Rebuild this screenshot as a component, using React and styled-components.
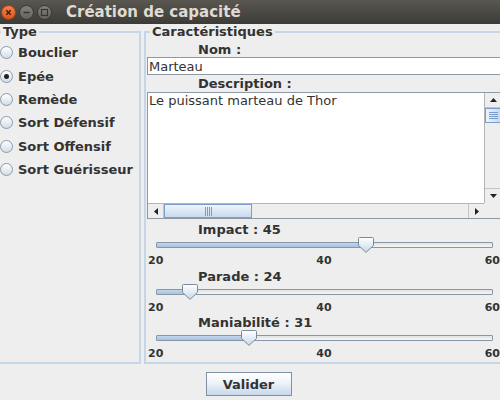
// Packages
import React from "react"
import styled, { createGlobalStyle } from "styled-components"

// Data
const types = ["Bouclier", "Epée", "Remède", "Sort Défensif", "Sort Offensif", "Sort Guérisseur"]

const stats = [
    { name: "Impact", value: 45 },
    { name: "Parade", value: 24 },
    { name: "Maniabilité", value: 31 },
]

const MIN = 20
const MAX = 60

// Styles
const GlobalStyle = createGlobalStyle`
    html, body {
        margin: 0;
        padding: 0;
        background: #eeeeee;
    }

    body {
        font-family: "DejaVu Sans", "Liberation Sans", sans-serif;
    }
`

const Window = styled.div`
    width: 500px;
    height: 400px;
    overflow: hidden;
    display: flex;
    flex-direction: column;
    background: #eeeeee;
    color: #333333;
`

const TitleBar = styled.header`
    height: 24px;
    flex: none;
    display: flex;
    align-items: center;
    padding-left: 1px;
    background: linear-gradient(#5a5750, #3c3b37);
`

const Controls = styled.div`
    display: flex;
    gap: 3px;
`

const Title = styled.h1`
    margin: 0 0 0 14px;
    font-size: 15px;
    font-weight: bold;
    color: #dfdbd2;
    white-space: nowrap;
`

const Panels = styled.main`
    height: 340px;
    flex: none;
    display: flex;
    gap: 3px;
    padding-top: 1px;
    margin-left: -5px;
    box-sizing: border-box;
`

const Group = styled.fieldset`
    width: ${props => props.$width};
    flex: none;
    margin: 0;
    padding: 0;
    min-inline-size: 0;
    box-sizing: border-box;
    border: 2px solid #c6d6e7;
    display: flex;
    flex-direction: column;
`

const Legend = styled.legend`
    margin-left: 4px;
    padding: 0 2px;
    font-size: 13px;
    line-height: 14px;
    font-weight: bold;
    color: #333333;
`

const RadioList = styled.div`
    display: flex;
    flex-direction: column;
    padding: 2px 0 0 3px;
`

const RadioRow = styled.label`
    height: 23.4px;
    display: flex;
    align-items: center;
    gap: 5px;
    font-size: 13px;
    font-weight: bold;
    white-space: nowrap;
`

const RadioMark = styled.span`
    width: 13px;
    height: 13px;
    flex: none;
    box-sizing: border-box;
    border-radius: 50%;
    border: 1px solid #8a9aae;
    background: linear-gradient(#ffffff, #d2dce8);
    display: flex;
    align-items: center;
    justify-content: center;

    &::after {
        content: "";
        width: 5px;
        height: 5px;
        border-radius: 50%;
        background: #222222;
        display: ${props => (props.$checked ? "block" : "none")};
    }
`

const Fields = styled.div`
    display: flex;
    flex-direction: column;
    padding-left: 1px;
`

const FieldLabel = styled.div`
    padding-left: 51px;
    margin-top: ${props => props.$top || "0"};
    font-size: 13px;
    line-height: 15px;
    font-weight: bold;
    white-space: nowrap;
`

const TextInput = styled.input`
    height: 18px;
    box-sizing: border-box;
    margin: 0;
    padding: 0 1px;
    border: 1px solid #8e99a6;
    background: #ffffff;
    font-family: inherit;
    font-size: 13px;
    color: #333333;
    outline: none;
`

const ScrollPane = styled.div`
    height: 127px;
    margin: 1px 0 3px;
    box-sizing: border-box;
    border: 1px solid #8e99a6;
    display: grid;
    grid-template-columns: 1fr 17px;
    grid-template-rows: 1fr 15px;
`

const Viewport = styled.div`
    background: #ffffff;
    padding: 0 1px;
    font-size: 13px;
    line-height: 15px;
    white-space: nowrap;
    overflow: hidden;
`

const Bar = styled.div`
    display: flex;
    flex-direction: ${props => (props.$vertical ? "column" : "row")};
    background: #eeeeee;
    border-${props => (props.$vertical ? "left" : "top")}: 1px solid #b5b5b5;
`

const ArrowButton = styled.div`
    flex: none;
    width: ${props => (props.$vertical ? "auto" : "16px")};
    height: ${props => (props.$vertical ? "15px" : "auto")};
    display: flex;
    align-items: center;
    justify-content: center;
    background: #eeeeee;
    box-sizing: border-box;
    border-${props => props.$edge}: 1px solid #c4c4c4;
`

const Track = styled.div`
    flex: 1;
    display: flex;
    flex-direction: ${props => (props.$vertical ? "column" : "row")};
`

const ScrollThumb = styled.div`
    flex: none;
    width: ${props => (props.$vertical ? "auto" : "88px")};
    height: ${props => (props.$vertical ? "15px" : "auto")};
    box-sizing: border-box;
    border: 1px solid #7c9ccd;
    background: linear-gradient(
        ${props => (props.$vertical ? "90deg" : "180deg")},
        #eef4fa,
        #c8daee
    );
    display: flex;
    align-items: center;
    justify-content: center;
`

const Corner = styled.div`
    background: #eeeeee;
`

const SliderBlock = styled.div`
    display: flex;
    flex-direction: column;
    margin-bottom: 0.7px;
`

const SliderRow = styled.div`
    height: 16px;
    padding: 0 9px;
`

const SliderTrack = styled.div`
    position: relative;
    top: 5px;
    height: 6px;
    box-sizing: border-box;
    border: 1px solid #8796a8;
    border-radius: 1px;
    background: linear-gradient(#e2e2e2, #f6f6f6);
`

const SliderFill = styled.div`
    height: 100%;
    background: linear-gradient(#c2d6ec, #a9c2de);
`

const SliderThumb = styled.svg`
    position: absolute;
    top: -6px;
    width: 16px;
    height: 16px;
`

const Ticks = styled.div`
    display: flex;
    justify-content: space-between;
    padding: 0 2px 0 1px;
    font-size: 11px;
    line-height: 15px;
    font-weight: bold;
`

const Footer = styled.footer`
    flex: 1;
    display: flex;
    justify-content: center;
    align-items: flex-start;
    padding-top: 8px;
`

const Button = styled.button`
    width: 86px;
    height: 24px;
    margin-left: -3px;
    border: 1px solid #8091a6;
    border-radius: 0;
    background: linear-gradient(#ffffff, #eef3f9 45%, #c6d7ea);
    font-family: inherit;
    font-size: 13px;
    font-weight: bold;
    color: #333333;
`

// Icons
function WindowButton({ kind }) {
    const close = kind === "close"

    return (
        <svg width="15" height="15" viewBox="0 0 15 15">
            <defs>
                <linearGradient id={`g-${kind}`} x1="0" y1="0" x2="0" y2="1">
                    <stop offset="0" stopColor={close ? "#f5814c" : "#84827c"} />
                    <stop offset="1" stopColor={close ? "#dc5520" : "#63615b"} />
                </linearGradient>
            </defs>
            <circle cx="7.5" cy="7.5" r="7" fill={`url(#g-${kind})`} stroke={close ? "#9c3d14" : "#36352f"} />
            {close && <path d="M5.3 5.3 L9.7 9.7 M9.7 5.3 L5.3 9.7" stroke="#3d1a0b" strokeWidth="1.4" />}
            {kind === "min" && <path d="M4.5 7.5 H10.5" stroke="#36352f" strokeWidth="1.5" />}
            {kind === "max" && <rect x="4.5" y="4.5" width="6" height="6" fill="none" stroke="#36352f" strokeWidth="1.2" />}
        </svg>
    )
}

function Arrow({ dir }) {
    const paths = {
        up: "M0 4 L3.5 0 L7 4 Z",
        down: "M0 0 L7 0 L3.5 4 Z",
        left: "M4 0 L4 7 L0 3.5 Z",
        right: "M0 0 L4 3.5 L0 7 Z",
    }
    const vertical = dir === "up" || dir === "down"

    return (
        <svg width={vertical ? 7 : 4} height={vertical ? 4 : 7}>
            <path d={paths[dir]} fill="#222222" />
        </svg>
    )
}

function Grip({ vertical }) {
    return (
        <svg width={vertical ? 9 : 7} height={vertical ? 7 : 9}>
            {[0, 2, 4, 6].map(i =>
                vertical ? (
                    <line key={i} x1="0" x2="9" y1={i + 0.5} y2={i + 0.5} stroke="#7c9ccd" />
                ) : (
                    <line key={i} y1="0" y2="9" x1={i + 0.5} x2={i + 0.5} stroke="#7c9ccd" />
                )
            )}
        </svg>
    )
}

function ScrollBar({ vertical }) {
    return (
        <Bar $vertical={vertical}>
            <ArrowButton $vertical={vertical} $edge={vertical ? "bottom" : "right"}>
                <Arrow dir={vertical ? "up" : "left"} />
            </ArrowButton>
            <Track $vertical={vertical}>
                <ScrollThumb $vertical={vertical}>
                    <Grip vertical={vertical} />
                </ScrollThumb>
            </Track>
            <ArrowButton $vertical={vertical} $edge={vertical ? "top" : "left"}>
                <Arrow dir={vertical ? "down" : "right"} />
            </ArrowButton>
        </Bar>
    )
}

function Slider({ name, value }) {
    const pct = ((value - MIN) / (MAX - MIN)) * 100

    return (
        <SliderBlock>
            <FieldLabel>
                {name} : {value}
            </FieldLabel>
            <SliderRow>
                <SliderTrack>
                    <SliderFill style={{ width: `${pct}%` }} />
                    <SliderThumb viewBox="0 0 16 16" style={{ left: `calc(${pct}% - 8.5px)` }}>
                        <defs>
                            <linearGradient id="thumb" x1="0" y1="0" x2="0" y2="1">
                                <stop offset="0" stopColor="#ffffff" />
                                <stop offset="1" stopColor="#c9d9ea" />
                            </linearGradient>
                        </defs>
                        <path
                            d="M0.5 1.5 Q0.5 0.5 1.5 0.5 H14.5 Q15.5 0.5 15.5 1.5 V8.5 L8 15.3 L0.5 8.5 Z"
                            fill="url(#thumb)"
                            stroke="#7a8a99"
                        />
                    </SliderThumb>
                </SliderTrack>
            </SliderRow>
            <Ticks>
                <span>{MIN}</span>
                <span>{(MIN + MAX) / 2}</span>
                <span>{MAX}</span>
            </Ticks>
        </SliderBlock>
    )
}

function App() {
    return (
        <Window>
            <GlobalStyle />

            <TitleBar>
                <Controls>
                    <WindowButton kind="close" />
                    <WindowButton kind="min" />
                    <WindowButton kind="max" />
                </Controls>
                <Title>Création de capacité</Title>
            </TitleBar>

            <Panels>
                <Group $width="146px">
                    <Legend>Type</Legend>
                    <RadioList>
                        {types.map(type => (
                            <RadioRow key={type}>
                                <RadioMark $checked={type === "Epée"} />
                                {type}
                            </RadioRow>
                        ))}
                    </RadioList>
                </Group>

                <Group $width="360px">
                    <Legend>Caractéristiques</Legend>
                    <Fields>
                        <FieldLabel $top="3px">Nom :</FieldLabel>
                        <TextInput defaultValue="Marteau" />

                        <FieldLabel $top="1px">Description :</FieldLabel>
                        <ScrollPane>
                            <Viewport>Le puissant marteau de Thor</Viewport>
                            <ScrollBar vertical />
                            <ScrollBar />
                            <Corner />
                        </ScrollPane>

                        {stats.map(stat => (
                            <Slider key={stat.name} {...stat} />
                        ))}
                    </Fields>
                </Group>
            </Panels>

            <Footer>
                <Button>Valider</Button>
            </Footer>
        </Window>
    )
}

export default App
